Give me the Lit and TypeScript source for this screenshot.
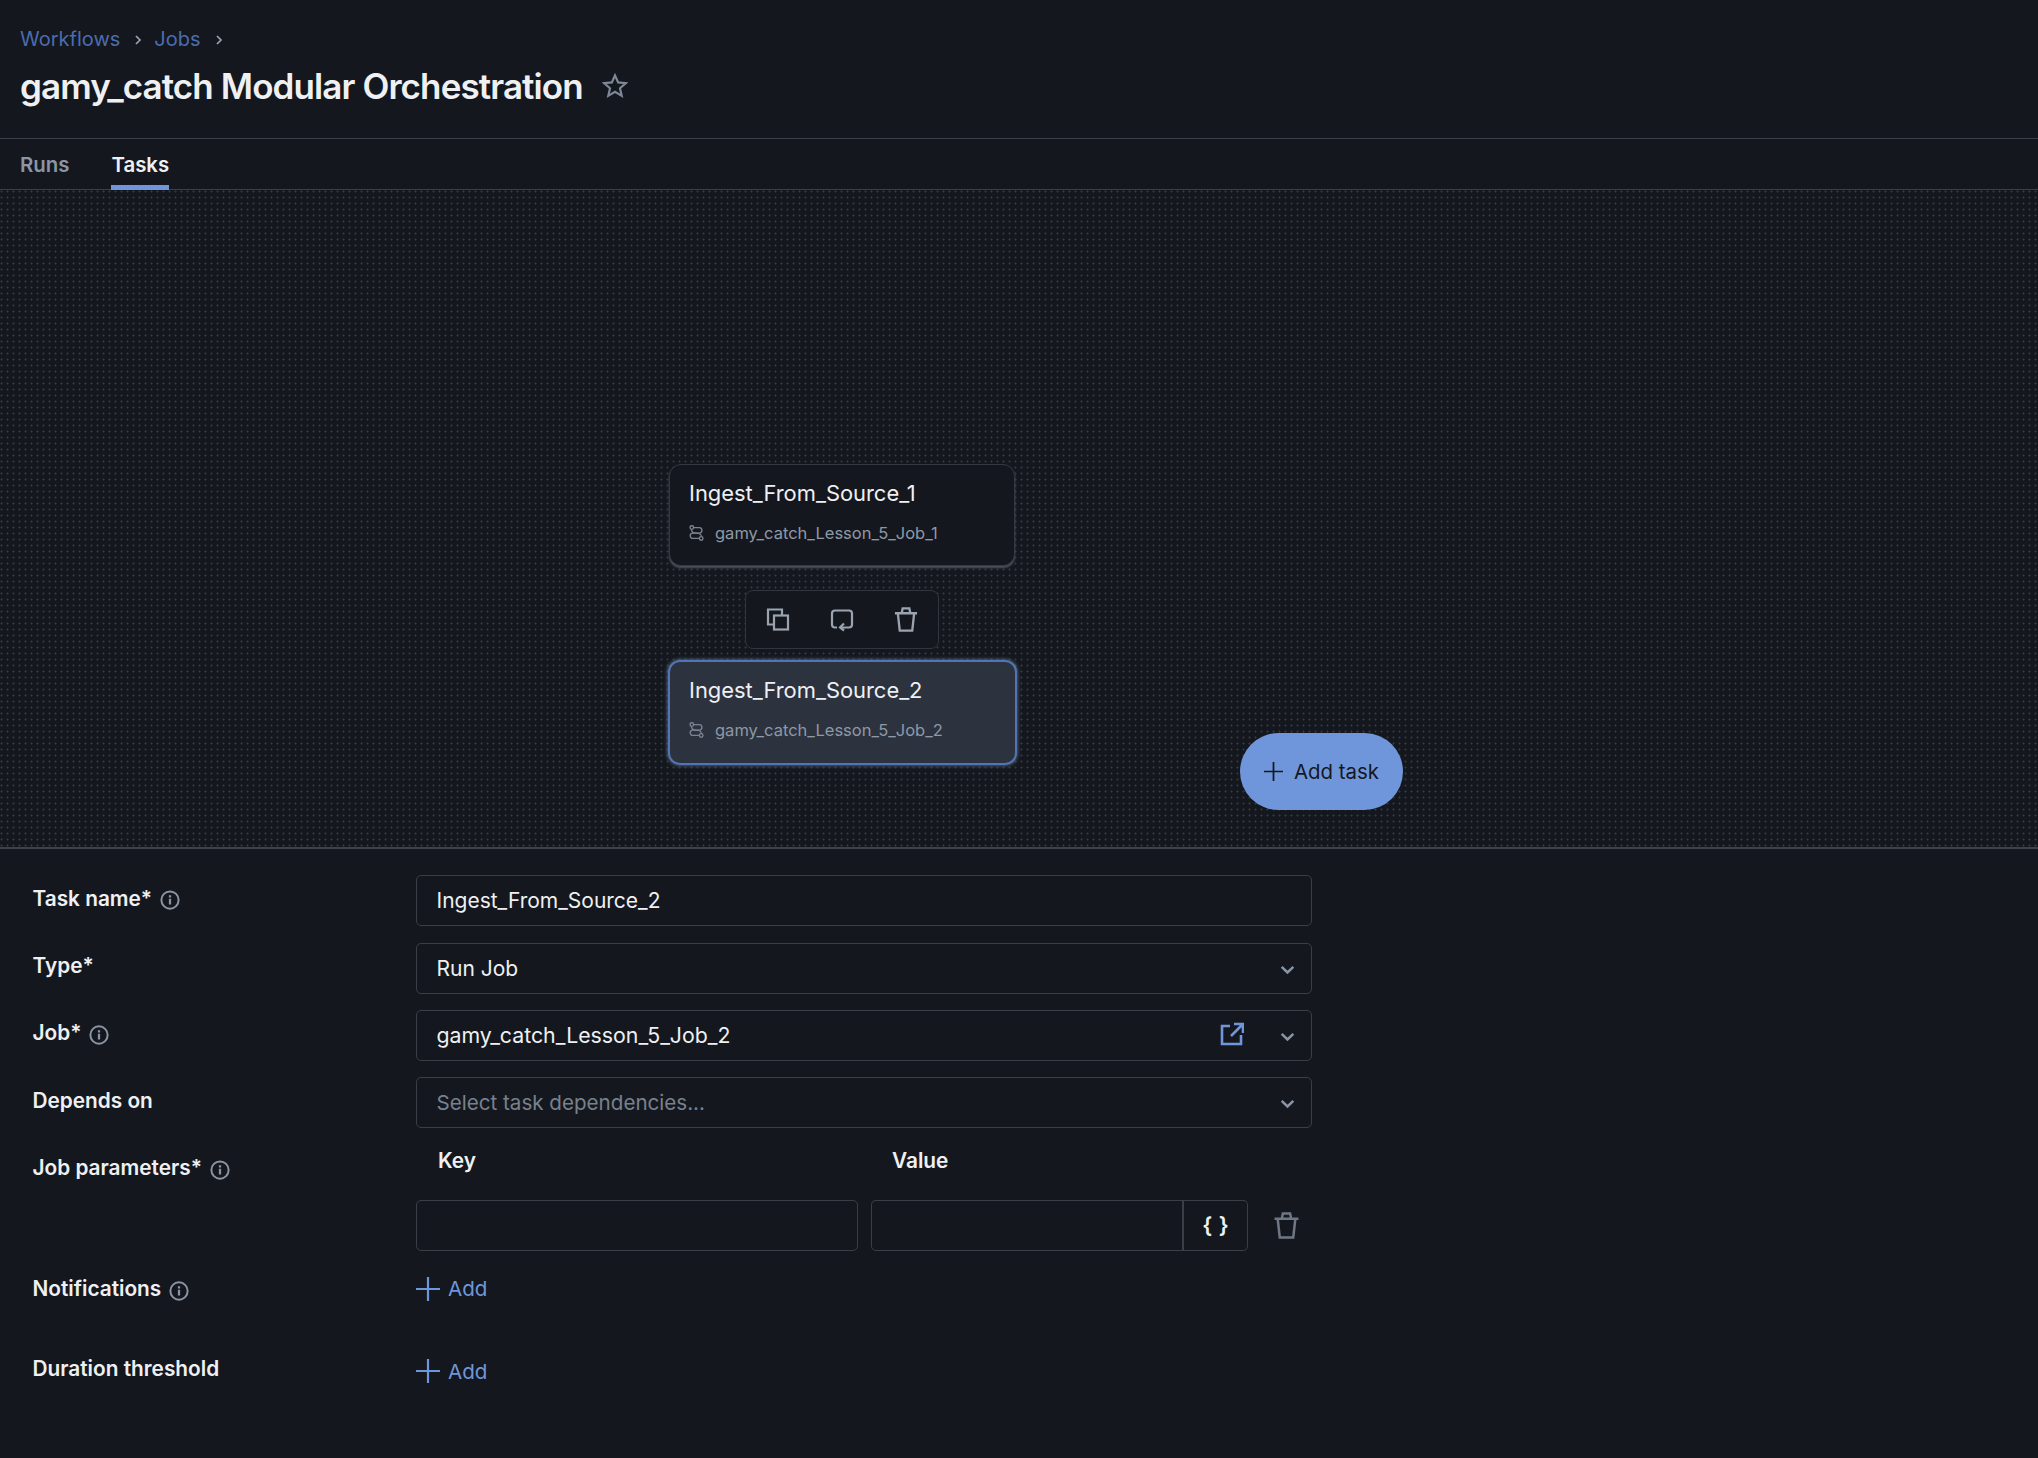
import { LitElement, html, css, svg } from "lit";
import { customElement } from "lit/decorators.js";

const info = html`<svg class="info" viewBox="0 0 16 16" fill="none"><circle cx="8" cy="8" r="6.9" stroke="currentColor" stroke-width="1.6"/><rect x="7.1" y="7" width="1.8" height="4.6" fill="currentColor"/><rect x="7.1" y="4.2" width="1.8" height="1.8" fill="currentColor"/></svg>`;
const chev = html`<svg class="chev" viewBox="0 0 14 14" fill="none"><path d="M2.2 4.8 7 9.4l4.8-4.6" stroke="currentColor" stroke-width="2.1"/></svg>`;
const plus = html`<svg class="plus" viewBox="0 0 24 24" fill="none"><path d="M12 0v24M0 12h24" stroke="currentColor" stroke-width="2.2"/></svg>`;
const trash = html`<svg viewBox="0 0 24 26" fill="none" stroke="currentColor" stroke-width="2.4"><path d="M.5 6.5h23M3.5 6.5l2 18h13l2-18M7.5 6.5l1-5h7l1 5"/></svg>`;
const jobIcon = html`<svg class="jobi" viewBox="0 0 14 15" fill="none" stroke="currentColor" stroke-width="1.25"><circle cx="2.6" cy="2.4" r="1.7"/><circle cx="11.4" cy="12.6" r="1.7"/><path d="M4.3 2.4h5.2a2.6 2.6 0 0 1 0 5.2H3.6a2.5 2.5 0 0 0 0 5h6.1"/><path d="M2.2 4.2c.2 2.2 2.4 3.4 4.6 3.4s4.8 1.2 4.8 3.2"/></svg>`;
const chevR = svg`<path d="M4 2l4 4-4 4" stroke="currentColor" stroke-width="1.7"/>`;

@customElement("app-root")
export class AppRoot extends LitElement {
  static styles = css`
    :host { display: block; width: 2038px; height: 1458px; background: #14181e; color: #eff0f3; font-family: Inter, "Liberation Sans", sans-serif; overflow: hidden; }
    .head { height: 139px; box-sizing: border-box; padding: 26px 20px 0; border-bottom: 1px solid #3a3f47; }
    .crumbs { display: flex; align-items: center; height: 26px; font-size: 20px; color: #4c6cae; }
    .crumbs svg { width: 12px; height: 12px; margin: 2px 10px 0 12px; color: #9aa3b0; }
    .titlerow { display: flex; align-items: center; margin-top: 12px; height: 44px; }
    h1 { margin: 0; font-size: 35px; font-weight: 600; letter-spacing: -0.9px; color: #eff0f3; }
    .star { width: 26px; height: 26px; margin-left: 19px; color: #7e8896; }
    .tabs { display: flex; gap: 42px; height: 51px; box-sizing: border-box; padding: 0 20px; border-bottom: 1px solid #3a3f47; }
    .tab { font-size: 20.4px; font-weight: 600; color: #8b95a3; padding-top: 13px; box-sizing: border-box; height: 51px; }
    .tab.on { color: #eff0f3; border-bottom: 5px solid #6f96da; }
    .canvas { position: relative; height: 657px; background-color: #14181e; background-image: radial-gradient(circle at 1.5px 1.5px, #32363e 0.9px, transparent 1.2px); background-size: 6px 6px; border-bottom: 2px solid #3d424b; }
    .node { position: absolute; box-sizing: border-box; border-radius: 12px; padding: 13px 19px 0; }
    .n1 { left: 669px; top: 274px; width: 346px; height: 102px; background: #14181e; border: 1px solid #333842; box-shadow: 0 2px 2px #4c525c; }
    .n2 { left: 668px; top: 470px; width: 349px; height: 105px; background: #2c333f; border: 2px solid #4f74b8; box-shadow: 0 0 4px #6b7c95; }
    .nt { font-size: 21.9px; line-height: 30px; color: #eff0f3; }
    .ns { display: flex; align-items: center; gap: 11px; margin-top: 14px; font-size: 16.5px; line-height: 22px; color: #8e98a6; }
    .jobi { width: 15px; height: 16px; flex: none; color: #7b8493; }
    .tools { position: absolute; left: 745px; top: 400px; width: 194px; height: 59px; box-sizing: border-box; border: 1px solid #30353e; border-radius: 8px; background: #14181e; display: flex; align-items: center; justify-content: space-between; padding: 0 20px; color: #9aa3af; }
    .tools svg { width: 24px; height: 25px; }
    .fab { position: absolute; left: 1240px; top: 543px; width: 163px; height: 77px; border-radius: 39px; background: #6f96da; color: #14181e; display: flex; align-items: center; justify-content: center; gap: 11px; font-size: 20.4px; }
    .fab .plus { width: 19px; height: 19px; }
    .form { display: grid; grid-template-columns: 383.5px 896px; padding: 26.2px 0 0 32.5px; row-gap: 16.33px; }
    .lab { display: flex; align-items: center; gap: 8px; height: 46px; font-size: 20.8px; font-weight: 600; color: #eff0f3; }
    .info { width: 20px; height: 20px; color: #8a94a3; margin-top: 4px; flex: none; }
    .field { height: 51px; box-sizing: border-box; border: 1px solid #3a3f47; border-radius: 5px; display: flex; align-items: center; padding: 0 15px 0 19.5px; font-size: 21px; color: #eff0f3; }
    .field .txt { flex: 1; }
    .field.job { font-size: 21.3px; }
    .field.ph { color: #78818e; font-size: 20.6px; }
    .chev { width: 17px; height: 17px; color: #8a94a3; margin-top: 2px; }
    .ext { width: 24px; height: 24px; margin: 0 35px 2px 0; color: #6f96da; }
    .ph-head { display: flex; height: 31px; align-items: center; font-size: 20.8px; font-weight: 600; }
    .ph-head .k { margin-left: 22px; width: 454px; }
    .prow { display: flex; align-items: center; margin-top: 24px; }
    .box { height: 51px; box-sizing: border-box; border: 1px solid #3a3f47; }
    .kbox { width: 442px; border-radius: 5px; }
    .vbox { width: 313px; margin-left: 13px; border-radius: 5px 0 0 5px; border-right-width: 2px; }
    .bbox { width: 64px; border-left: 0; border-radius: 0 5px 5px 0; display: flex; align-items: center; justify-content: center; font-weight: 600; font-size: 22px; word-spacing: 1px; color: #eff0f3; }
    .ptrash { width: 25px; height: 27px; margin-left: 26px; color: #6f7785; }
    .ptrash svg { width: 25px; height: 27px; display: block; }
    .add { display: flex; align-items: center; gap: 8px; color: #6f96da; font-size: 20.6px; height: 44px; }
    .plus { width: 24px; height: 24px; flex: none; }
    .notif { height: 44px; }
    .durl { margin-top: 19px; }
    .dura { margin-top: 22px; }
  `;

  render() {
    return html`
      <div class="head">
        <div class="crumbs">
          <span>Workflows</span>
          <svg viewBox="0 0 12 12" fill="none">${chevR}</svg>
          <span>Jobs</span>
          <svg viewBox="0 0 12 12" fill="none">${chevR}</svg>
        </div>
        <div class="titlerow">
          <h1>gamy_catch Modular Orchestration</h1>
          <svg class="star" viewBox="0 0 24 24" fill="none" stroke="currentColor" stroke-width="2"><path d="M12 2.2l2.9 6.5 7.1.7-5.4 4.7 1.6 7-6.2-3.7-6.2 3.7 1.6-7L2 9.4l7.1-.7z"/></svg>
        </div>
      </div>
      <div class="tabs">
        <div class="tab">Runs</div>
        <div class="tab on">Tasks</div>
      </div>
      <div class="canvas">
        <div class="node n1">
          <div class="nt">Ingest_From_Source_1</div>
          <div class="ns">${jobIcon}<span>gamy_catch_Lesson_5_Job_1</span></div>
        </div>
        <div class="tools">
          <svg viewBox="0 0 24 24" fill="none" stroke="currentColor" stroke-width="2.2"><path d="M8 17H2V2h14v6"/><rect x="8" y="8" width="14" height="14"/></svg>
          <svg viewBox="0 0 24 24" fill="none" stroke="currentColor" stroke-width="2.2"><path d="M7 20H5a3 3 0 0 1-3-3V6a3 3 0 0 1 3-3h14a3 3 0 0 1 3 3v11a3 3 0 0 1-3 3h-8"/><path d="M14 16l-4 4 4 3"/></svg>
          ${trash}
        </div>
        <div class="node n2">
          <div class="nt">Ingest_From_Source_2</div>
          <div class="ns">${jobIcon}<span>gamy_catch_Lesson_5_Job_2</span></div>
        </div>
        <div class="fab">${plus}<span>Add task</span></div>
      </div>
      <div class="form">
        <div class="lab">Task name*${info}</div>
        <div class="field"><span class="txt">Ingest_From_Source_2</span></div>
        <div class="lab">Type*</div>
        <div class="field"><span class="txt">Run Job</span>${chev}</div>
        <div class="lab">Job*${info}</div>
        <div class="field job"><span class="txt">gamy_catch_Lesson_5_Job_2</span>
          <svg class="ext" viewBox="0 0 24 24" fill="none" stroke="currentColor" stroke-width="2.6"><path d="M10 4H2v18h19v-9"/><path d="M11 14 22 3M14 2h9v9" /></svg>
          ${chev}</div>
        <div class="lab">Depends on</div>
        <div class="field ph"><span class="txt">Select task dependencies...</span>${chev}</div>
        <div class="lab">Job parameters*${info}</div>
        <div>
          <div class="ph-head"><span class="k">Key</span><span>Value</span></div>
          <div class="prow">
            <div class="box kbox"></div>
            <div class="box vbox"></div>
            <div class="box bbox">{ }</div>
            <div class="ptrash">${trash}</div>
          </div>
        </div>
        <div class="lab notif">Notifications${info}</div>
        <div class="add">${plus}<span>Add</span></div>
        <div class="lab notif durl">Duration threshold</div>
        <div class="add dura">${plus}<span>Add</span></div>
      </div>
    `;
  }
}
